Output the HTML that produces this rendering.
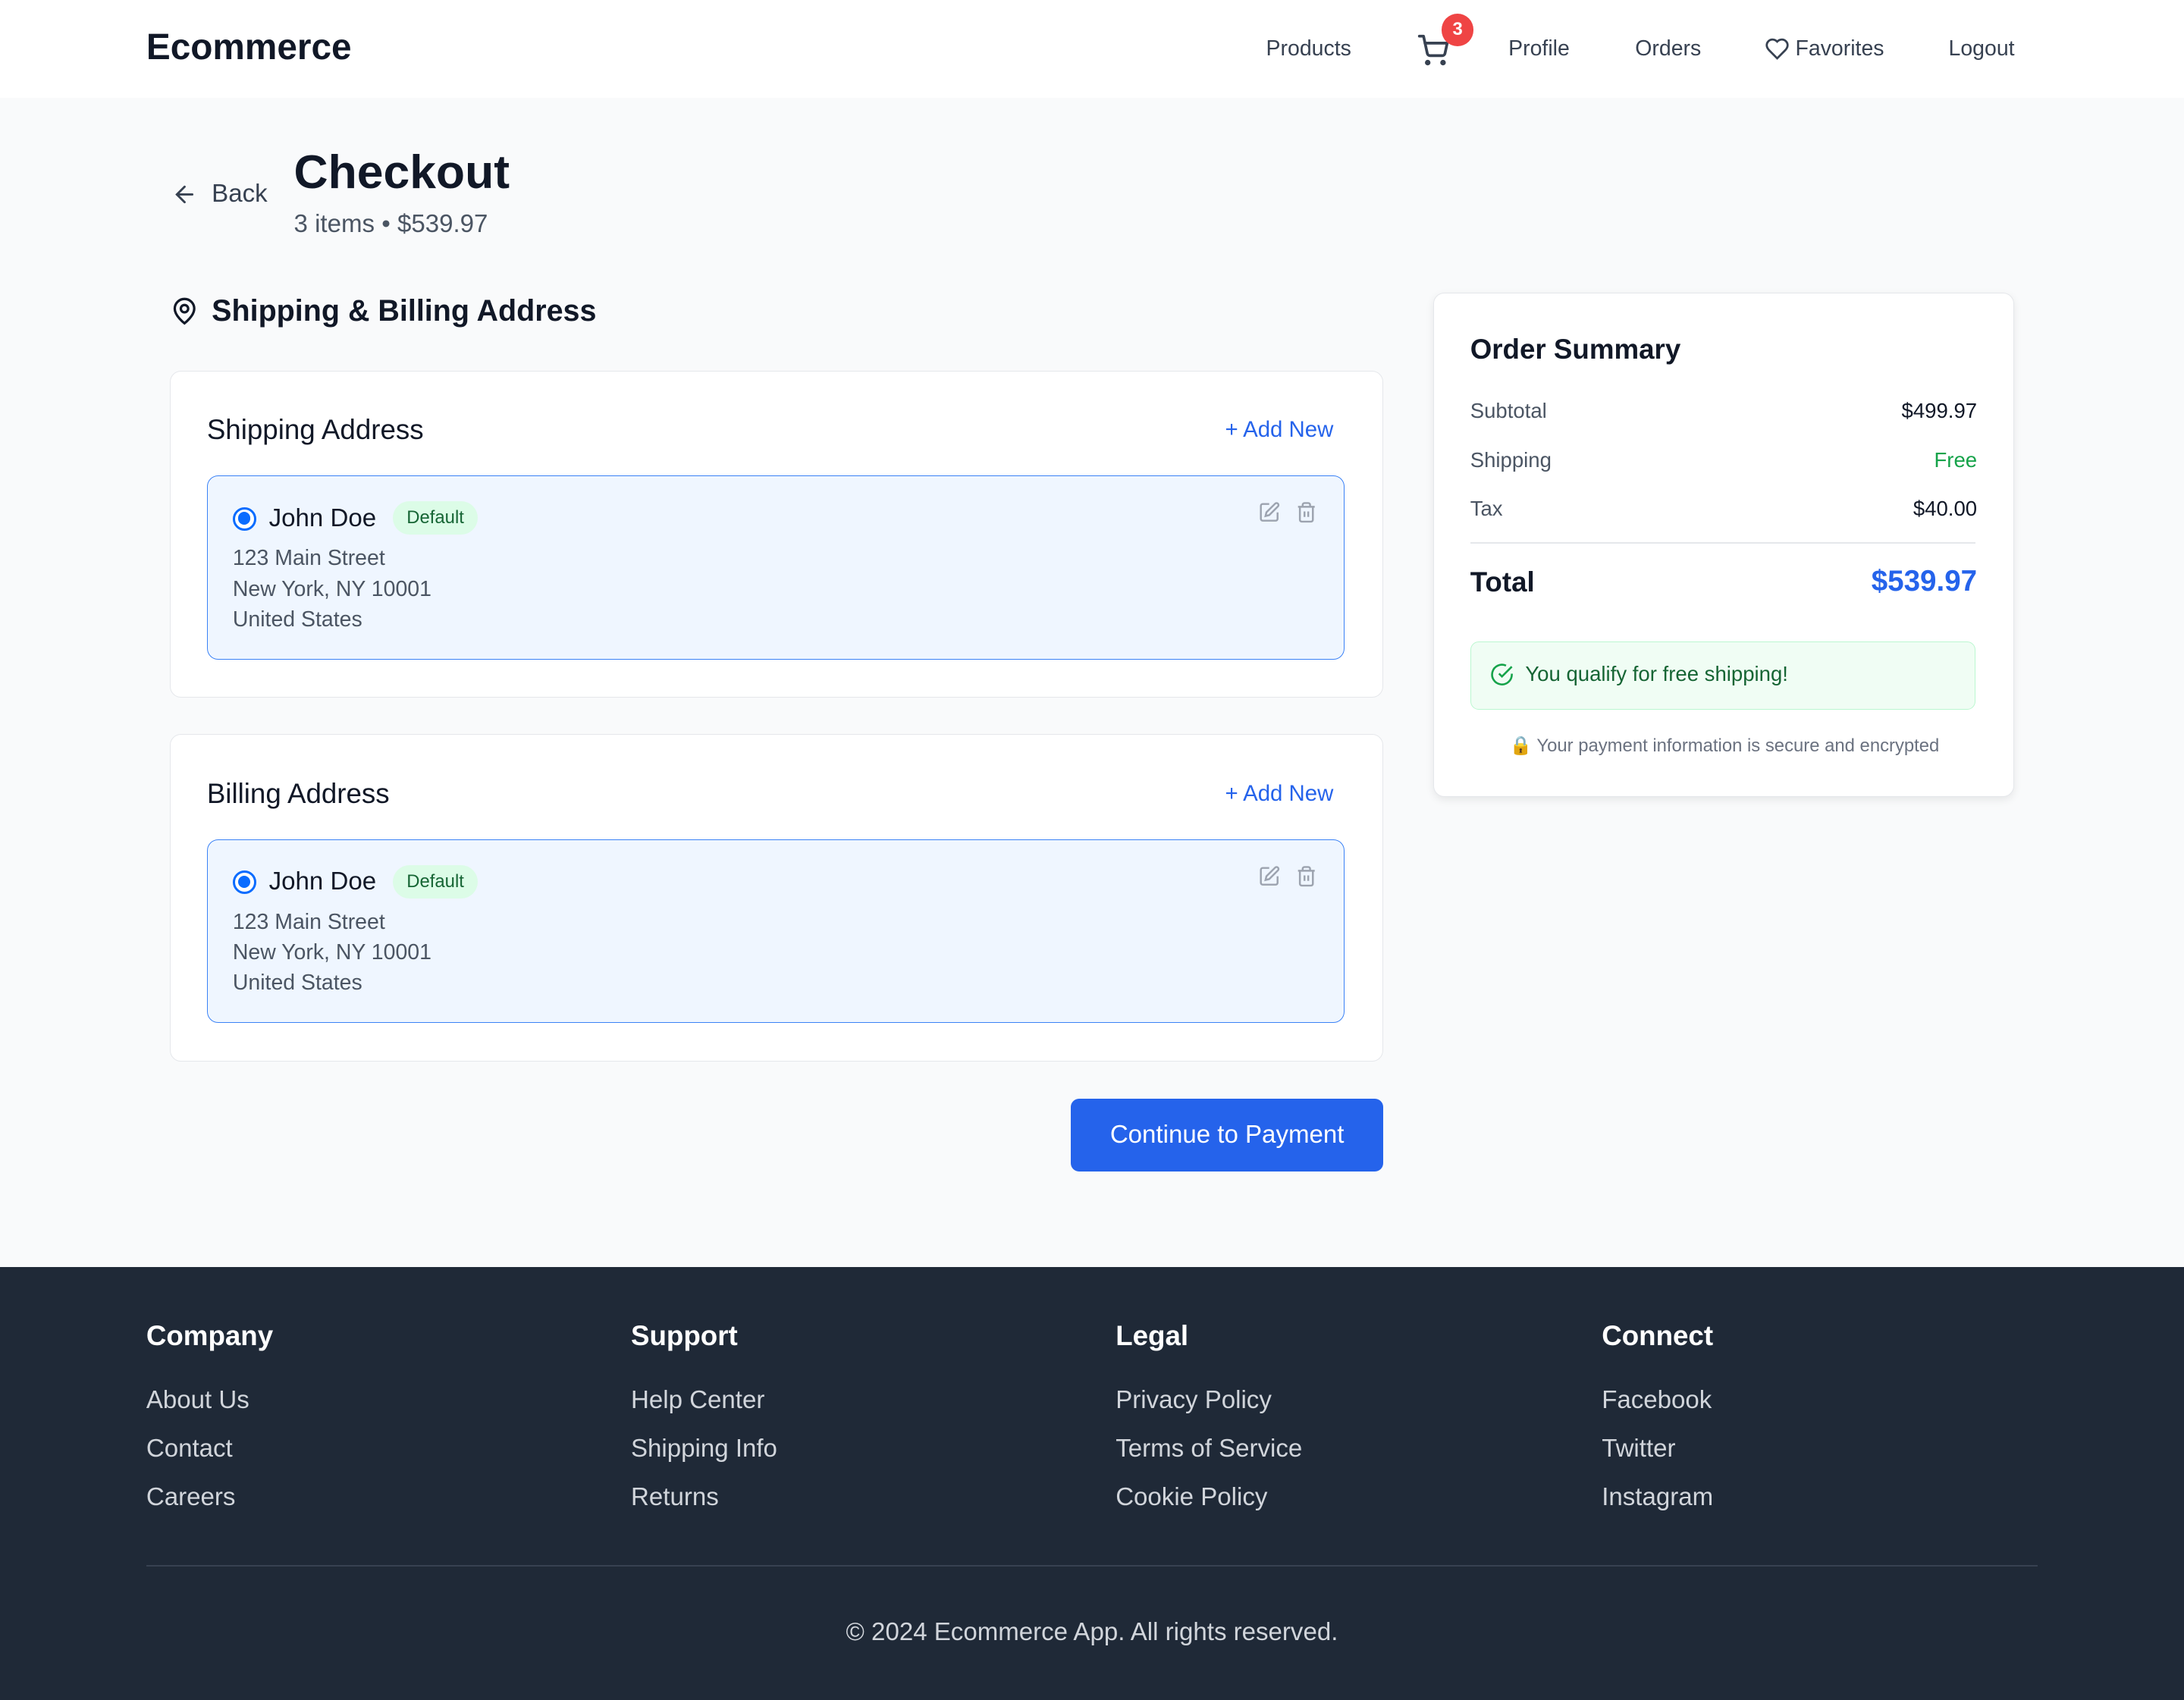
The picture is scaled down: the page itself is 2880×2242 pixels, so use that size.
<!DOCTYPE html>
<html><head><meta charset="utf-8"><style>
*{margin:0;padding:0;box-sizing:border-box}
html,body{width:2880px;height:2242px;overflow:hidden}
body{background:#f9fafb;font-family:"Liberation Sans",Arial,sans-serif;color:#111827}
#r{zoom:1.8367;position:relative;width:1568px;height:1221px}
.a{position:absolute;white-space:nowrap}
.nav{position:absolute;left:0;top:0;width:1568px;height:70px;background:#fff}
.ni{position:absolute;top:26px;font-size:15.5px;color:#374151}
.card{position:absolute;background:#fff;border:1px solid #e5e7eb;border-radius:8px}
.inner{position:absolute;left:26px;width:817px;height:132px;background:#eff6ff;border:1px solid #3b82f6;border-radius:8px}
.radio{position:absolute;left:18px;top:22px;width:17px;height:17px;border-radius:50%;border:2px solid #0a6cff;background:#fff}
.radio:after{content:"";position:absolute;left:2px;top:2px;width:9px;height:9px;border-radius:50%;background:#0a6cff}
.badge{position:absolute;left:133px;top:18px;width:61px;height:24px;border-radius:12px;background:#dcfce7;color:#166534;font-size:13px;text-align:center;line-height:24px}
.addr{position:absolute;left:18px;font-size:15.5px;color:#4b5563}
.footer{position:absolute;left:0;top:910px;width:1568px;height:311px;background:#1f2937}
.fh{position:absolute;top:38px;font-size:20px;font-weight:bold;color:#fff}
.fl{position:absolute;font-size:18px;color:#d1d5db}
</style></head><body><div id="r">
<div class="nav">
<div class="a" style="left:105px;top:19px;font-size:26px;font-weight:bold;color:#111827">Ecommerce</div>
<div class="ni" style="left:909px">Products</div>
<svg class="a" style="left:1017px;top:24px" width="24" height="24" viewBox="0 0 24 24" fill="none" stroke="#374151" stroke-width="2" stroke-linecap="round" stroke-linejoin="round"><circle cx="8" cy="21" r="1"/><circle cx="19" cy="21" r="1"/><path d="M2 2h3l2.7 12.4a2 2 0 0 0 2 1.6h8.7a2 2 0 0 0 2-1.6L22 7H6"/></svg>
<div class="a" style="left:1035px;top:10px;width:23px;height:23px;border-radius:50%;background:#ef4444;color:#fff;font-size:13px;font-weight:bold;text-align:center;line-height:23px">3</div>
<div class="ni" style="left:1083px">Profile</div>
<div class="ni" style="left:1174px">Orders</div>
<svg class="a" style="left:1267px;top:26px" width="18" height="18" viewBox="0 0 24 24" fill="none" stroke="#374151" stroke-width="2"><path d="M19 14c1.5-1.5 3-3.2 3-5.5A5.5 5.5 0 0 0 16.5 3c-1.8 0-3 .5-4.5 2-1.5-1.5-2.7-2-4.5-2A5.5 5.5 0 0 0 2 8.5c0 2.3 1.5 4 3 5.5l7 7z"/></svg>
<div class="ni" style="left:1289px">Favorites</div>
<div class="ni" style="left:1399px">Logout</div>
</div>

<svg class="a" style="left:123px;top:130px" width="19" height="19" viewBox="0 0 24 24" fill="none" stroke="#374151" stroke-width="2" stroke-linecap="round"><path d="M19 12H5M12 19l-7-7 7-7"/></svg>
<div class="a" style="left:152px;top:129px;font-size:18px;color:#374151">Back</div>
<div class="a" style="left:211px;top:104px;font-size:34px;font-weight:bold">Checkout</div>
<div class="a" style="left:211px;top:151px;font-size:18px;color:#4b5563">3 items • $539.97</div>

<svg class="a" style="left:122px;top:213px" width="21" height="21" viewBox="0 0 24 24" fill="none" stroke="#111827" stroke-width="2"><path d="M20 10c0 6-8 12-8 12s-8-6-8-12a8 8 0 0 1 16 0z"/><circle cx="12" cy="10" r="3"/></svg>
<div class="a" style="left:152px;top:211px;font-size:21.5px;font-weight:bold">Shipping &amp; Billing Address</div>

<div class="card" style="left:122px;top:266px;width:871px;height:235px">
<div class="a" style="left:26px;top:31px;font-size:20px">Shipping Address</div>
<div class="a" style="left:757px;top:33px;font-size:16px;color:#2563eb">+ Add New</div>
<div class="inner" style="top:75px">
<div class="radio"></div>
<div class="a" style="left:44px;top:20px;font-size:18px;color:#111827">John Doe</div>
<div class="badge">Default</div>
<svg class="a" style="left:754px;top:18px" width="16" height="16" viewBox="0 0 24 24" fill="none" stroke="#9ca3af" stroke-width="2"><path d="M12 3H5a2 2 0 0 0-2 2v14a2 2 0 0 0 2 2h14a2 2 0 0 0 2-2v-7"/><path d="M18.4 2.6a2 2 0 0 1 3 3L12 15l-4 1 1-4z"/></svg>
<svg class="a" style="left:781px;top:18px" width="16" height="16" viewBox="0 0 24 24" fill="none" stroke="#9ca3af" stroke-width="2"><path d="M3 6h18M19 6v14a2 2 0 0 1-2 2H7a2 2 0 0 1-2-2V6M8 6V4a2 2 0 0 1 2-2h4a2 2 0 0 1 2 2v2M10 11v6M14 11v6"/></svg>
<div class="addr" style="top:50px">123 Main Street</div>
<div class="addr" style="top:72px">New York, NY 10001</div>
<div class="addr" style="top:94px">United States</div>
</div></div>

<div class="card" style="left:122px;top:527px;width:871px;height:235px">
<div class="a" style="left:26px;top:31px;font-size:20px">Billing Address</div>
<div class="a" style="left:757px;top:33px;font-size:16px;color:#2563eb">+ Add New</div>
<div class="inner" style="top:75px">
<div class="radio"></div>
<div class="a" style="left:44px;top:20px;font-size:18px;color:#111827">John Doe</div>
<div class="badge">Default</div>
<svg class="a" style="left:754px;top:18px" width="16" height="16" viewBox="0 0 24 24" fill="none" stroke="#9ca3af" stroke-width="2"><path d="M12 3H5a2 2 0 0 0-2 2v14a2 2 0 0 0 2 2h14a2 2 0 0 0 2-2v-7"/><path d="M18.4 2.6a2 2 0 0 1 3 3L12 15l-4 1 1-4z"/></svg>
<svg class="a" style="left:781px;top:18px" width="16" height="16" viewBox="0 0 24 24" fill="none" stroke="#9ca3af" stroke-width="2"><path d="M3 6h18M19 6v14a2 2 0 0 1-2 2H7a2 2 0 0 1-2-2V6M8 6V4a2 2 0 0 1 2-2h4a2 2 0 0 1 2 2v2M10 11v6M14 11v6"/></svg>
<div class="addr" style="top:50px">123 Main Street</div>
<div class="addr" style="top:72px">New York, NY 10001</div>
<div class="addr" style="top:94px">United States</div>
</div></div>

<div class="a" style="left:769px;top:789px;width:224px;height:52px;background:#2563eb;border-radius:6px;color:#fff;font-size:18px;text-align:center;line-height:52px">Continue to Payment</div>

<div class="card" style="left:1029px;top:210px;width:417px;height:362px;box-shadow:0 2px 6px rgba(0,0,0,.08)">
<div class="a" style="left:26px;top:29px;font-size:20px;font-weight:bold">Order Summary</div>
<div class="a" style="left:26px;top:76px;font-size:15px;color:#4b5563">Subtotal</div>
<div class="a" style="right:26px;top:76px;font-size:15px">$499.97</div>
<div class="a" style="left:26px;top:111px;font-size:15px;color:#4b5563">Shipping</div>
<div class="a" style="right:26px;top:111px;font-size:15px;color:#16a34a">Free</div>
<div class="a" style="left:26px;top:146px;font-size:15px;color:#4b5563">Tax</div>
<div class="a" style="right:26px;top:146px;font-size:15px">$40.00</div>
<div class="a" style="left:26px;top:179px;width:363px;height:1px;background:#e5e7eb"></div>
<div class="a" style="left:26px;top:196px;font-size:20px;font-weight:bold">Total</div>
<div class="a" style="right:26px;top:195px;font-size:21px;font-weight:bold;color:#2563eb">$539.97</div>
<div class="a" style="left:26px;top:250px;width:363px;height:49px;background:#f0fdf4;border:1px solid #bbf7d0;border-radius:6px">
<svg class="a" style="left:14px;top:15px" width="17" height="17" viewBox="0 0 24 24" fill="none" stroke="#16a34a" stroke-width="2"><path d="M22 11.1V12a10 10 0 1 1-5.9-9.1"/><path d="M9 11l3 3L22 4"/></svg>
<div class="a" style="left:39px;top:14px;font-size:15px;color:#166534">You qualify for free shipping!</div></div>
<div class="a" style="left:0;width:417px;top:317px;font-size:13px;color:#6b7280;text-align:center">🔒 Your payment information is secure and encrypted</div>
</div>

<div class="footer">
<div class="fh" style="left:105px">Company</div>
<div class="fh" style="left:453px">Support</div>
<div class="fh" style="left:801px">Legal</div>
<div class="fh" style="left:1150px">Connect</div>
<div class="fl" style="left:105px;top:85px">About Us</div>
<div class="fl" style="left:105px;top:120px">Contact</div>
<div class="fl" style="left:105px;top:155px">Careers</div>
<div class="fl" style="left:453px;top:85px">Help Center</div>
<div class="fl" style="left:453px;top:120px">Shipping Info</div>
<div class="fl" style="left:453px;top:155px">Returns</div>
<div class="fl" style="left:801px;top:85px">Privacy Policy</div>
<div class="fl" style="left:801px;top:120px">Terms of Service</div>
<div class="fl" style="left:801px;top:155px">Cookie Policy</div>
<div class="fl" style="left:1150px;top:85px">Facebook</div>
<div class="fl" style="left:1150px;top:120px">Twitter</div>
<div class="fl" style="left:1150px;top:155px">Instagram</div>
<div class="a" style="left:105px;top:214px;width:1358px;height:1px;background:#374151"></div>
<div class="fl" style="left:0;width:1568px;text-align:center;top:252px">© 2024 Ecommerce App. All rights reserved.</div>
</div>
</div></body></html>
